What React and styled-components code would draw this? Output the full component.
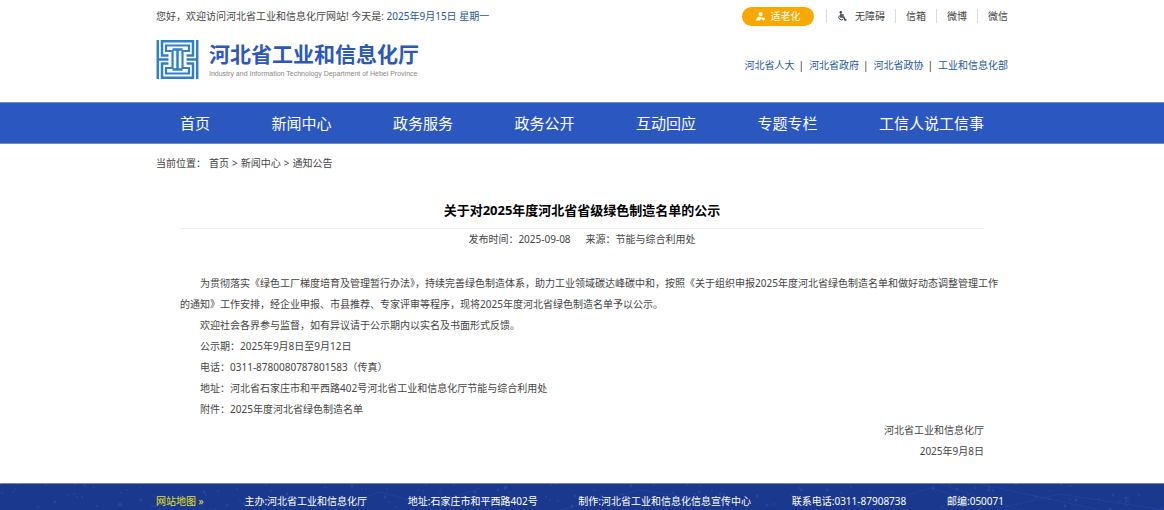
import React from "react";
import styled, { createGlobalStyle } from "styled-components";

const Global = createGlobalStyle`
  *, *::before, *::after { box-sizing: border-box; }
  body {
    margin: 0;
    background: #fff;
    color: #444;
    font: 10px/20px "Noto Sans", "Noto Sans CJK SC", sans-serif;
  }
  a { color: inherit; text-decoration: none; }
  p, h1, ul, ol { margin: 0; padding: 0; }
  ul, ol { list-style: none; }
`;

const Container = styled.div`
  width: calc(100% - 48px);
  max-width: 852px;
  margin: 0 auto;
`;

const TopBar = styled(Container)`
  display: flex;
  align-items: center;
  justify-content: space-between;
  height: 32px;
`;

const Today = styled.time`
  color: #24579b;
`;

const Tools = styled.ul`
  display: flex;
  align-items: center;
`;

const Tool = styled.li`
  line-height: 14px;
  padding: 0 10px;
  border-left: 1px solid #d9dce3;
  &:last-child { padding-right: 0; }
`;

const ToolLink = styled.a`
  display: flex;
  align-items: center;
  gap: 8px;
`;

const ElderButton = styled.button`
  display: flex;
  align-items: center;
  justify-content: center;
  gap: 6px;
  width: 72px;
  height: 19px;
  margin-right: 12px;
  padding: 0;
  border: 0;
  border-radius: 10px;
  background: #f9a800;
  color: #fff;
  font: inherit;
`;

const BrandRow = styled(Container)`
  display: flex;
  align-items: flex-end;
  justify-content: space-between;
  padding: 8px 0 23px;
`;

const Brand = styled.a`
  display: flex;
  align-items: center;
  gap: 10px;
`;

const BrandName = styled.span`
  display: block;
  color: #2b58b9;
  font-size: 21px;
  font-weight: 700;
  line-height: 29px;
`;

const BrandSub = styled.span`
  display: block;
  color: #888;
  font: 7px/10px "Liberation Sans", sans-serif;
`;

const Related = styled.ul`
  display: flex;
  padding-bottom: 4px;
  color: #24579b;
`;

const RelatedItem = styled.li`
  & + &::before {
    content: "|";
    margin: 0 5px 0 4px;
    color: #333;
  }
`;

const Nav = styled.nav`
  background: #2b58be;
  border: solid #6b8ad0;
  border-width: 1px 0;
`;

const NavList = styled(Container).attrs({ as: "ul" })`
  display: flex;
  justify-content: space-between;
  padding: 0 24px;
  color: #fff;
  font-size: 15px;
  line-height: 40px;
`;

const Crumbs = styled(Container).attrs({ as: "nav" })`
  padding: 9px 0;
`;

const CrumbList = styled.ol`
  display: flex;
  gap: 3px;
`;

const Article = styled(Container).attrs({ as: "main" })`
  padding: 17px 0 21px 24px;
`;

const ArticleHead = styled.header`
  margin-right: 24px;
  text-align: center;
`;

const Title = styled.h1`
  padding-bottom: 7px;
  border-bottom: 1px solid #eee;
  color: #000;
  font-size: 13px;
  line-height: 22px;
`;

const Meta = styled.p`
  display: flex;
  justify-content: center;
  gap: 15px;
`;

const Content = styled.div`
  margin-top: 24px;
  line-height: 21px;
`;

const Paragraph = styled.p`
  padding-right: 6px;
  text-indent: 2em;
`;

const Signature = styled.p`
  margin-right: 24px;
  text-align: right;
`;

const Footer = styled.footer`
  position: relative;
  overflow: hidden;
  border-top: 1px solid #6f86bd;
  background: #1b388f;
`;

const FooterPattern = styled.svg`
  position: absolute;
  inset: 0;
  width: 100%;
  height: 100%;
`;

const FooterRow = styled(Container).attrs({ as: "ul" })`
  position: relative;
  display: flex;
  justify-content: space-between;
  padding: 10px 4px 2px 0;
  color: #fff;
  line-height: 14px;
`;

const SiteMap = styled.a`
  color: #e6e01c;
`;

function Emblem() {
  return (
    <svg width="43" height="39" viewBox="0 0 42 39" fill="none" stroke="#2f80c8" strokeWidth="2.5" aria-hidden="true">
      <path d="M1.300 0V39M40.700 0V39M1.300 19.500H12M40.700 19.500H30" />
      <path d="M12 15.500H5.500V1.300H36.500V15.500H30" />
      <path d="M12 23.500H5.500V37.700H36.500V23.500H30" />
      <path d="M9.500 5.500H32.500V11H26V28H32.500V33.500H9.500V28H16V11H9.500Z" strokeWidth="2.200" />
      <path d="M16 9.500H26M21 9.500V29.500M16 29.500H26" />
    </svg>
  );
}

function ElderIcon() {
  return (
    <svg width="9" height="9" viewBox="0 0 9 9" fill="#fff" aria-hidden="true">
      <circle cx="4.600" cy="2.100" r="2.100" />
      <path d="M0 8.500C0 6 2 4.600 4 4.400L5.200 6.200L4 8.500Z" />
      <path d="M7.200 8.800L5 6.600C4.700 5.300 6.400 4.700 7.200 6C8 4.900 9.400 5.600 9 6.900Z" />
    </svg>
  );
}

function AccessIcon() {
  return (
    <svg width="10" height="10" viewBox="0 0 9 10" fill="none" stroke="#333c50" aria-hidden="true">
      <circle cx="3.300" cy="1.200" r="1.200" fill="#333c50" stroke="none" />
      <path d="M3.300 2.500V6H6.300L7.500 9H9M3.300 4H6.300" strokeWidth="1.300" />
      <path d="M2 4.600A2.400 2.400 0 1 0 5.800 8" />
    </svg>
  );
}

const dots = Array.from({ length: 170 }, (_, i) => ({
  x: (i * 137 + ((i * i * 29) % 83)) % 1164,
  y: (i * 17 + ((i * i * 7) % 11)) % 26,
  r: i % 4 === 0 ? 1.4 : 0.9,
}));

const navItems = ["首页", "新闻中心", "政务服务", "政务公开", "互动回应", "专题专栏", "工信人说工信事"];
const related = ["河北省人大", "河北省政府", "河北省政协", "工业和信息化部"];
const paragraphs = [
  "为贯彻落实《绿色工厂梯度培育及管理暂行办法》，持续完善绿色制造体系，助力工业领域碳达峰碳中和，按照《关于组织申报2025年度河北省绿色制造名单和做好动态调整管理工作的通知》工作安排，经企业申报、市县推荐、专家评审等程序，现将2025年度河北省绿色制造名单予以公示。",
  "欢迎社会各界参与监督，如有异议请于公示期内以实名及书面形式反馈。",
  "公示期：2025年9月8日至9月12日",
  "电话：0311-8780080787801583（传真）",
  "地址：河北省石家庄市和平西路402号河北省工业和信息化厅节能与综合利用处",
];
const footerItems = [
  "主办:河北省工业和信息化厅",
  "地址:石家庄市和平西路402号",
  "制作:河北省工业和信息化信息宣传中心",
  "联系电话:0311-87908738",
  "邮编:050071",
];

export default function App() {
  return (
    <div lang="zh-CN">
      <Global />
      <header>
        <TopBar>
          <p>
            您好，欢迎访问河北省工业和信息化厅网站! 今天是: <Today dateTime="2025-09-15">2025年9月15日 星期一</Today>
          </p>
          <Tools>
            <li><ElderButton type="button"><ElderIcon />适老化</ElderButton></li>
            <Tool><ToolLink href="#"><AccessIcon />无障碍</ToolLink></Tool>
            <Tool><ToolLink href="#">信箱</ToolLink></Tool>
            <Tool><ToolLink href="#">微博</ToolLink></Tool>
            <Tool><ToolLink href="#">微信</ToolLink></Tool>
          </Tools>
        </TopBar>
        <BrandRow>
          <Brand href="#">
            <Emblem />
            <span>
              <BrandName>河北省工业和信息化厅</BrandName>
              <BrandSub>Industry and Information Technology Department of Hebei Province</BrandSub>
            </span>
          </Brand>
          <Related>
            {related.map((t) => <RelatedItem key={t}><a href="#">{t}</a></RelatedItem>)}
          </Related>
        </BrandRow>
      </header>
      <Nav>
        <NavList>
          {navItems.map((t) => <li key={t}><a href="#">{t}</a></li>)}
        </NavList>
      </Nav>
      <Crumbs>
        <CrumbList>
          <li>当前位置：</li>
          <li><a href="#">首页</a></li>
          <li>&gt;</li>
          <li><a href="#">新闻中心</a></li>
          <li>&gt;</li>
          <li><a href="#">通知公告</a></li>
        </CrumbList>
      </Crumbs>
      <Article>
        <ArticleHead>
          <Title>关于对2025年度河北省省级绿色制造名单的公示</Title>
          <Meta><span>发布时间：2025-09-08</span><span>来源：节能与综合利用处</span></Meta>
        </ArticleHead>
        <Content>
          {paragraphs.map((t) => <Paragraph key={t}>{t}</Paragraph>)}
          <Paragraph>附件：<a href="#">2025年度河北省绿色制造名单</a></Paragraph>
          <Signature>河北省工业和信息化厅</Signature>
          <Signature>2025年9月8日</Signature>
        </Content>
      </Article>
      <Footer>
        <FooterPattern viewBox="0 0 1164 26" preserveAspectRatio="xMidYMid slice" aria-hidden="true">
          <g stroke="#2a50ad" strokeWidth="1" opacity="0.4" fill="none">
            <path d="M330 26L380 8L430 22L480 4M560 26L640 6L730 20M860 26L930 4L1000 24L1060 10L1164 26M940 0L1020 26M980 0L1100 26" />
          </g>
          <g fill="#2c58bd" opacity="0.5">
            {dots.map((d, i) => <circle key={i} cx={d.x} cy={d.y} r={d.r} />)}
          </g>
        </FooterPattern>
        <FooterRow>
          <li><SiteMap href="#">网站地图 »</SiteMap></li>
          {footerItems.map((t) => <li key={t}>{t}</li>)}
        </FooterRow>
      </Footer>
    </div>
  );
}
